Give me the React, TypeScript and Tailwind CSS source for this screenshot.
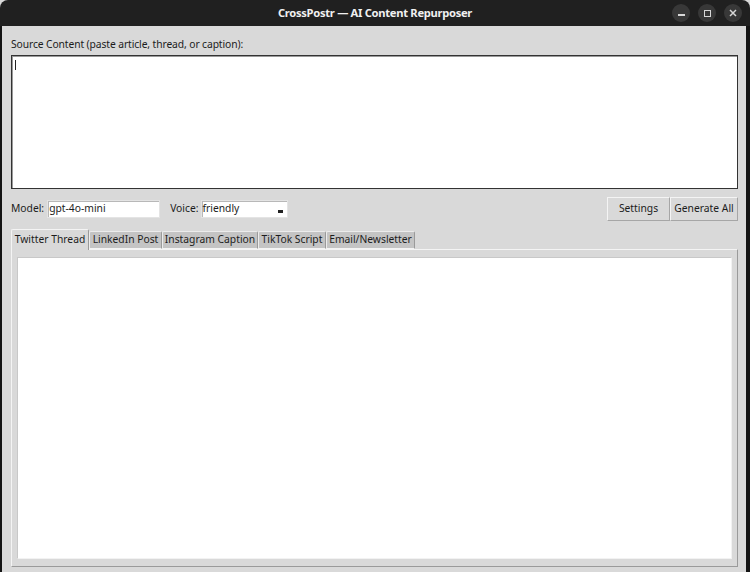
import { useState } from 'react'

const tabs = [
  { label: 'Twitter Thread', w: 'w-[78px]' },
  { label: 'LinkedIn Post', w: 'w-[73px]' },
  { label: 'Instagram Caption', w: 'w-[96px]' },
  { label: 'TikTok Script', w: 'w-[68px]' },
  { label: 'Email/Newsletter', w: 'w-[89px]' },
]

function TitleBar() {
  return (
    <div className="relative flex h-[26px] items-center justify-center rounded-t-[8px] bg-[#202020]">
      <span className="text-[11.2px] font-bold text-[#f0f0f0] [font-family:'Noto_Sans',sans-serif] tracking-[-0.3px]">
        CrossPostr — AI Content Repurposer
      </span>
      <div className="absolute right-[8px] top-[4px] flex gap-[8px]">
        <div className="flex h-[18px] w-[18px] items-center justify-center rounded-full bg-[#383838]">
          <div className="mt-[4px] h-[1.5px] w-[7px] bg-[#d8d8d8]" />
        </div>
        <div className="flex h-[18px] w-[18px] items-center justify-center rounded-full bg-[#383838]">
          <div className="h-[7px] w-[7px] border-[1.5px] border-[#d8d8d8]" />
        </div>
        <div className="flex h-[18px] w-[18px] items-center justify-center rounded-full bg-[#383838]">
          <svg width="8" height="8" viewBox="0 0 8 8">
            <path d="M1 1L7 7M7 1L1 7" stroke="#d8d8d8" strokeWidth="1.5" />
          </svg>
        </div>
      </div>
    </div>
  )
}

export default function App() {
  const [active, setActive] = useState(0)

  return (
    <div className="h-[572px] w-[750px] overflow-hidden bg-[#d9d9d9] text-[10.3px] text-[#1c1c1c] [font-family:'Noto_Sans',sans-serif]">
      <TitleBar />
      <div className="flex h-[546px] flex-col border-l-[2px] border-r-[4px] border-[#141414] pl-[9px] pr-[8px]">
        {/* Source */}
        <div className="mt-[11px] h-[14px] leading-[14px] whitespace-nowrap tracking-[-0.1px]">
          Source Content (paste article, thread, or caption):
        </div>
        <div className="mt-[4px] h-[134px] border border-[#333] bg-white p-[2px] shadow-[inset_1px_1px_0_#9a9a9a]">
          <div className="ml-[1px] mt-[2px] h-[10px] w-px bg-[#222]" />
        </div>

        {/* Controls row */}
        <div className="mt-[7px] flex h-[24px] items-center whitespace-nowrap pt-[1px]">
          <span>Model:</span>
          <div className="ml-[3px] flex h-[18px] w-[113px] items-center border border-[#e4e4e4] bg-white pl-[1px] shadow-[inset_1px_1px_0_#b8b8b8]">
            gpt-4o-mini
          </div>
          <span className="ml-[10px]">Voice:</span>
          <div className="ml-[2px] flex h-[18px] w-[87px] items-center border border-[#e4e4e4] bg-white pl-[1px] shadow-[inset_1px_1px_0_#b8b8b8]">
            <span className="flex-1">friendly</span>
            <div className="mr-[1px] flex h-[14px] w-[10px] items-end justify-center pb-[3px]">
              <div className="h-[3px] w-[5px] bg-[#222]" />
            </div>
          </div>
          <div className="ml-auto flex">
            <button className="h-[24px] w-[63px] border border-[#f4f4f4] border-b-[#a6a6a6] border-r-[#a6a6a6] bg-[#d9d9d9]">
              Settings
            </button>
            <button className="h-[24px] w-[68px] border border-[#f4f4f4] border-b-[#a6a6a6] border-r-[#a6a6a6] bg-[#d9d9d9]">
              Generate All
            </button>
          </div>
        </div>

        {/* Tabs */}
        <div className="relative z-10 mt-[9px] flex h-[20px] items-end whitespace-nowrap">
          {tabs.map((t, i) => (
            <button
              key={t.label}
              onClick={() => setActive(i)}
              className={
                i === active
                  ? `${t.w} h-[21px] mb-[-1px] overflow-hidden rounded-t-[2px] border border-b-0 border-[#f4f4f4] border-r-[#9a9a9a] bg-[#d9d9d9] text-center`
                  : `${t.w} h-[18px] overflow-hidden rounded-t-[2px] border border-[#ececec] border-r-[#9a9a9a] border-b-[#f4f4f4] bg-[#c4c4c4] text-center`
              }
            >
              {t.label}
            </button>
          ))}
        </div>
        <div className="flex h-[318px] flex-col border border-[#f4f4f4] border-b-[#9a9a9a] border-r-[#9a9a9a] px-[5px] pb-[7px] pt-[7px]">
          <div className="flex-1 border border-[#c8c8c8] border-b-[#f2f2f2] border-r-[#f2f2f2] bg-white" />
        </div>
      </div>
    </div>
  )
}
